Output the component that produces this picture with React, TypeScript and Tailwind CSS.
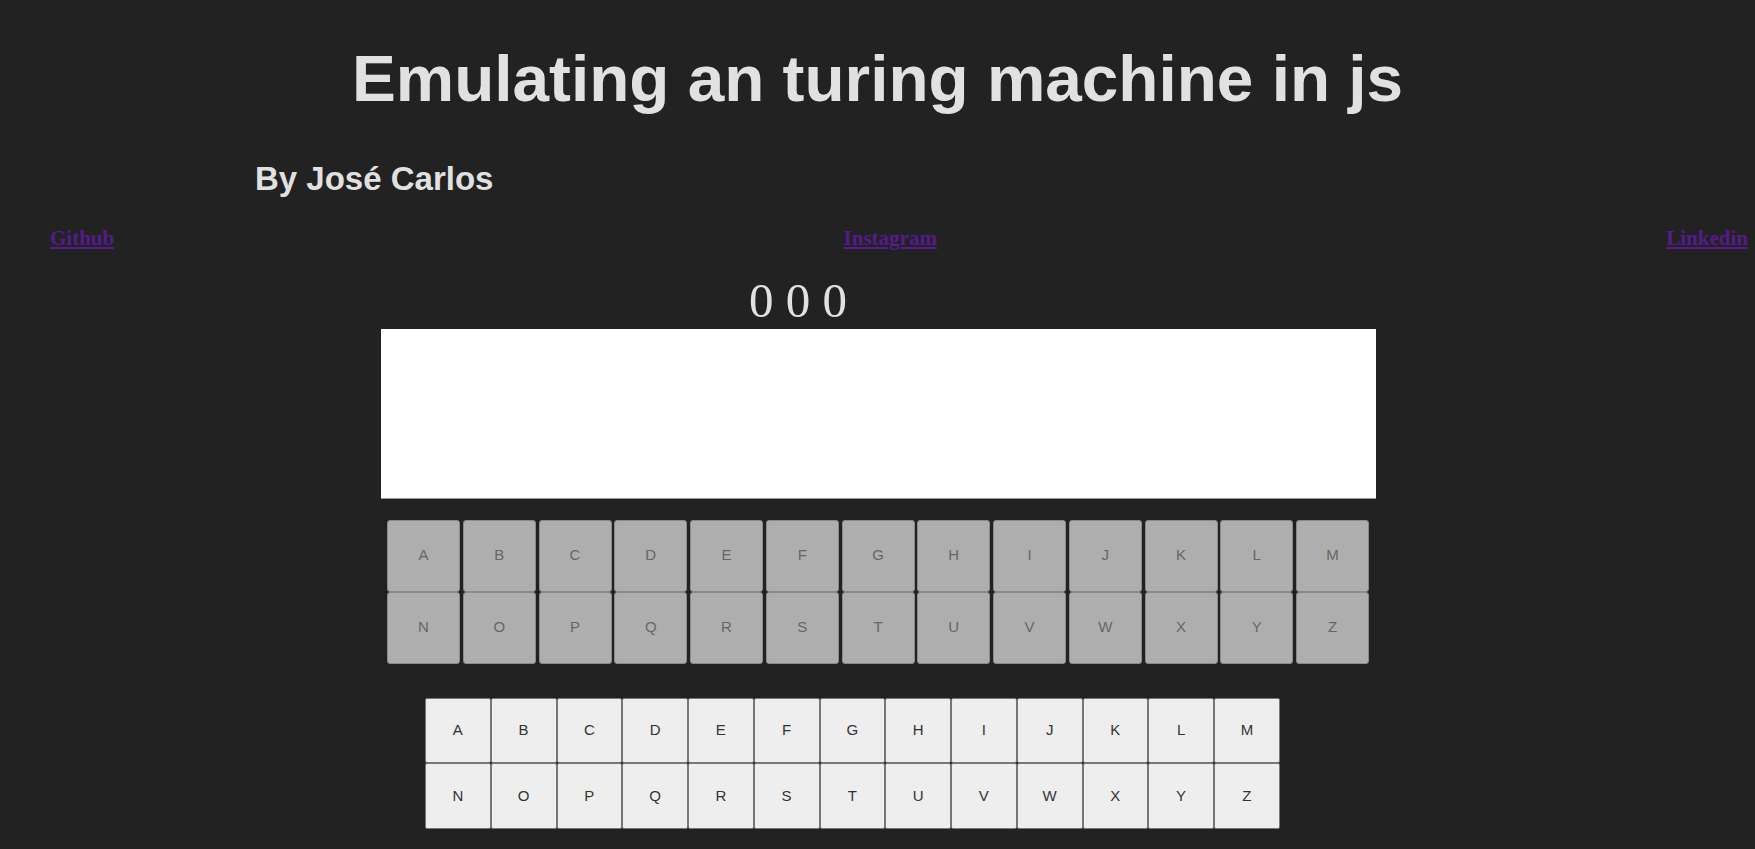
import React from "react";

const row1 = ["A", "B", "C", "D", "E", "F", "G", "H", "I", "J", "K", "L", "M"];
const row2 = ["N", "O", "P", "Q", "R", "S", "T", "U", "V", "W", "X", "Y", "Z"];

export default function App() {
  return (
    <div className="min-h-[849px] w-full bg-[#222222] pt-[46px] pb-[20px]" style={{ fontFamily: '"Liberation Sans", Arial, sans-serif' }}>
      <h1 className="text-center text-[65.7px] font-bold leading-none text-[#e1e1e1]">
        Emulating an turing machine in js
      </h1>
      <h2 className="mt-[50px] pl-[255px] text-[33px] font-bold leading-none text-[#e1e1e1]">
        By José Carlos
      </h2>
      <div
        className="mt-[33px] flex justify-between pl-[50px] pr-[7px] text-[21px] font-bold leading-none"
        style={{ fontFamily: '"Liberation Serif", "Times New Roman", serif' }}
      >
        <a href="#" className="text-[#551a8b] underline">Github</a>
        <a href="#" className="text-[#551a8b] underline">Instagram</a>
        <a href="#" className="text-[#551a8b] underline">Linkedin</a>
      </div>
      <div
        className="mt-[27px] pl-[749px] text-[49px] leading-none text-[#e1e1e1]"
        style={{ fontFamily: '"Liberation Serif", "Times New Roman", serif' }}
      >
        0 0 0
      </div>
      <div className="mt-[4px] flex pl-[381px]">
        <div className="h-[170px] w-[995px] border-b border-[#9a9a9a] bg-white" />
      </div>
      <div className="mt-[21px] flex pl-[387px]">
        <div className="grid grid-cols-[repeat(13,73px)] gap-x-[2.75px]">
          {[...row1, ...row2].map((l) => (
            <div
              key={"g" + l}
              className="flex h-[72px] items-center justify-center rounded-[3px] border border-[#8a8a8a] bg-[#aeaeae] text-[15px] text-[#666666]"
            >
              {l}
            </div>
          ))}
        </div>
      </div>
      <div className="mt-[34px] flex pl-[425px]">
        <div className="grid grid-cols-[repeat(13,65.75px)]">
          {[...row1, ...row2].map((l) => (
            <div
              key={"w" + l}
              className="flex h-[65.5px] items-center justify-center rounded-[2px] border border-[#777777] bg-[#eeeeee] text-[15px] text-[#333333]"
            >
              {l}
            </div>
          ))}
        </div>
      </div>
    </div>
  );
}
